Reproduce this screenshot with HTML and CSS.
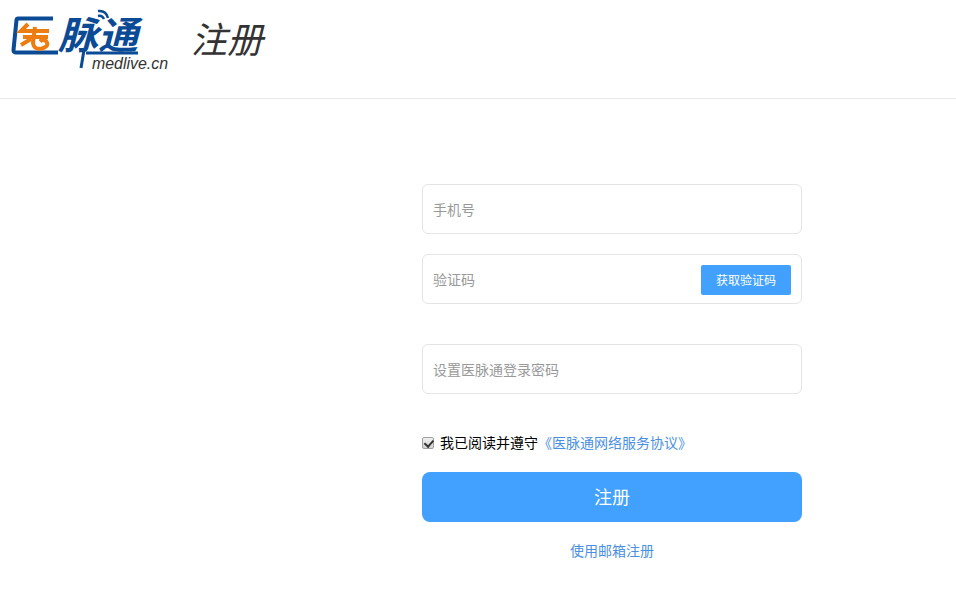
FILE: index.html
```html
<!DOCTYPE html>
<html lang="zh-CN">
<head>
<meta charset="utf-8">
<title>注册</title>
<link rel="stylesheet" href="styles.css">
</head>
<body>
<header class="top">
  <svg class="logo" width="170" height="74" viewBox="0 0 170 74" aria-label="医脉通 medlive.cn">
    <path d="M53 18.500H18Q16.800 18.500 16.500 20L13.500 50Q13.300 52.500 15.500 52.500H58" fill="none" stroke="#0b4a94" stroke-width="4"/>
    <path d="M28 24L21 31H49M23 37H48M35 27L33 43Q34 50 42 48.500Q50 46 46 41Q43 38.500 40 41.500M21 45L31 39" fill="none" stroke="#ee7d11" stroke-width="4"/>
    <text class="logo-cn" x="58" y="49" textLength="80" lengthAdjust="spacingAndGlyphs">脉通</text>
    <path d="M98 16Q102 15 104 19M98 11Q106 10 108 18" fill="none" stroke="#0b4a94" stroke-width="2.500"/>
    <path d="M84 50L81 68" fill="none" stroke="#0b4a94" stroke-width="3"/>
    <path d="M86 53H138" fill="none" stroke="#0b4a94" stroke-width="3"/>
    <text class="logo-en" x="92" y="69" textLength="76" lengthAdjust="spacingAndGlyphs">medlive.cn</text>
  </svg>
  <h1 class="title">注册</h1>
</header>
<main class="form">
  <div class="field"><span class="ph">手机号</span></div>
  <div class="field field-code"><span class="ph">验证码</span><button class="code-btn" type="button">获取验证码</button></div>
  <div class="field field-pass"><span class="ph">设置医脉通登录密码</span></div>
  <label class="agree"><input class="check" type="checkbox" checked><span>我已阅读并遵守</span><a class="link" href="#">《医脉通网络服务协议》</a></label>
  <button class="submit" type="button">注册</button>
  <a class="link alt" href="#">使用邮箱注册</a>
</main>
</body>
</html>
```
FILE: styles.css
```css
* { box-sizing: border-box; }
html, body { margin: 0; height: 100%; }
body { background: #fff; font-family: "Noto Sans CJK SC", "Liberation Sans", sans-serif; font-size: 14px; color: #000; overflow: hidden; }
.top { height: 99px; border-bottom: 1px solid #e8e8e8; display: flex; align-items: flex-start; }
.logo { flex: none; }
.logo-cn { font-family: "Noto Sans CJK SC", sans-serif; font-size: 38px; font-weight: 700; font-style: italic; fill: #0b4a94; }
.logo-en { font-family: "Liberation Sans", sans-serif; font-size: 16px; font-style: italic; fill: #333; }
.title { margin: 14px 0 0 21px; font-size: 36px; line-height: 46px; font-weight: 400; font-style: italic; color: #333; }
.form { width: 380px; margin: 85px 0 0 422px; display: flex; flex-direction: column; }
.field { height: 50px; border: 1px solid #e4e4e4; border-radius: 6px; display: flex; align-items: center; justify-content: space-between; padding: 0 10px; margin-bottom: 20px; }
.field-code { margin-bottom: 40px; }
.field-pass { margin-bottom: 39px; }
.ph { color: #999; font-size: 14px; }
.code-btn { width: 90px; height: 30px; margin-top: 1px; border: 0; border-radius: 2px; background: #42a0ff; color: #fff; font: inherit; font-size: 12px; padding: 0 0 1px; }
.agree { display: flex; align-items: center; height: 20px; font-size: 14px; line-height: 18px; }
.agree span, .agree .link { margin-top: -2px; }
.check { appearance: none; -webkit-appearance: none; position: relative; width: 12px; height: 12px; margin: 0 6px 0 0; border: 1px solid #a0a0a0; border-radius: 2px; background: linear-gradient(#f0f0f0, #d2d2d2); }
.check:checked::after { content: ""; position: absolute; left: 2.500px; top: 0; width: 3.500px; height: 7px; border: solid #333; border-width: 0 2px 2px 0; transform: rotate(42deg); }
.link { color: #4a90e2; text-decoration: none; }
.submit { height: 50px; margin-top: 19px; border: 0; border-radius: 8px; background: #42a0ff; color: #fff; font: inherit; font-size: 18px; padding: 0 0 2px; }
.alt { align-self: center; margin-top: 18px; line-height: 20px; }
```
